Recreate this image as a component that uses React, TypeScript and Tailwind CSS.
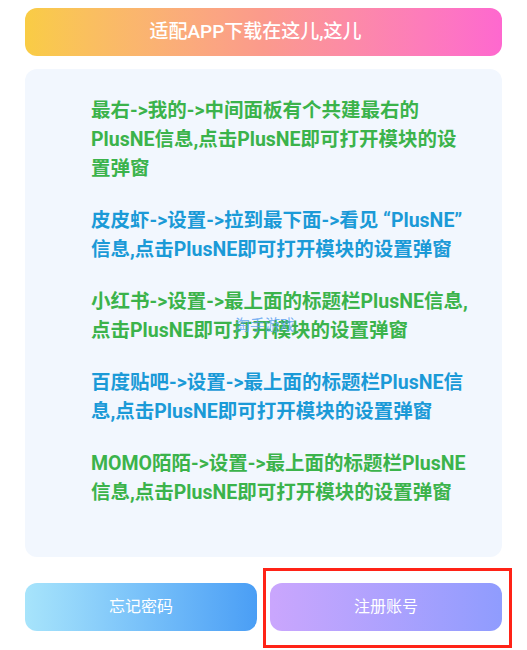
import React from "react";

const tips = [
  { color: "text-[#3bb34b]", text: "最右->我的->中间面板有个共建最右的PlusNE信息,点击PlusNE即可打开模块的设置弹窗" },
  { color: "text-[#1b9ad7]", text: "皮皮虾->设置->拉到最下面->看见 “PlusNE” 信息,点击PlusNE即可打开模块的设置弹窗" },
  { color: "text-[#3bb34b]", text: "小红书->设置->最上面的标题栏PlusNE信息,点击PlusNE即可打开模块的设置弹窗" },
  { color: "text-[#1b9ad7]", text: "百度贴吧->设置->最上面的标题栏PlusNE信息,点击PlusNE即可打开模块的设置弹窗" },
  { color: "text-[#3bb34b]", text: "MOMO陌陌->设置->最上面的标题栏PlusNE信息,点击PlusNE即可打开模块的设置弹窗" },
];

const font = { fontFamily: "Roboto, 'Noto Sans CJK SC', sans-serif" };

export default function App() {
  return (
    <div className="relative w-[527px] h-[650px] bg-white px-[25px] pt-2" style={font}>
      <div className="h-12 rounded-xl bg-gradient-to-r from-[#f9cc44] via-[#fb9a8c] to-[#fe68cf] flex items-center justify-center pr-4 text-white text-[19px] font-medium">
        适配APP下载在这儿,这儿
      </div>

      <div className="relative mt-[13px] h-[488px] rounded-xl bg-[#f2f7fe] pt-[27px] pl-[66px] pr-[26px]">
        <div className="flex flex-col gap-[23px]">
          {tips.map((t, i) => (
            <p key={i} className={`text-[19.5px] leading-[29px] font-bold ${t.color}`}>
              {t.text}
            </p>
          ))}
        </div>
        <span className="absolute left-[210px] top-[245px] text-[15px] text-[#5b9ff0]/80">淘手游戏</span>
      </div>

      <div className="mt-[26px] grid grid-cols-2 gap-[13px]">
        <button className="h-12 rounded-xl bg-gradient-to-r from-[#a7e4fb] to-[#4a9ef5] text-white text-[16px]">
          忘记密码
        </button>
        <button className="h-12 rounded-xl bg-gradient-to-r from-[#caa6fd] to-[#8f9cfe] text-white text-[16px]">
          注册账号
        </button>
      </div>

      <div className="absolute left-[263px] top-[568px] w-[249px] h-[80px] border-[3px] border-[#ff2317]" />
    </div>
  );
}
